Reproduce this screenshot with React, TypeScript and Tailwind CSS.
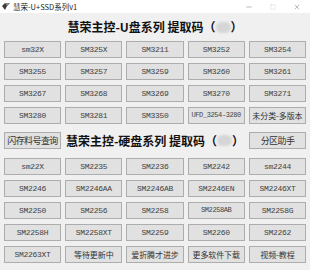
import { Minus, Square, X } from 'lucide-react'

const U_DISK = [
  'sm32X', 'SM325X', 'SM3211', 'SM3252', 'SM3254',
  'SM3255', 'SM3257', 'SM3259', 'SM3260', 'SM3261',
  'SM3267', 'SM3268', 'SM3269', 'SM3270', 'SM3271',
  'SM3280', 'SM3281', 'SM3350', 'UFD_3254-3280', '未分类-多版本',
]

const SSD = [
  'sm22X', 'SM2235', 'SM2236', 'SM2242', 'sm2244',
  'SM2246', 'SM2246AA', 'SM2246AB', 'SM2246EN', 'SM2246XT',
  'SM2250', 'SM2256', 'SM2258', 'SM2258AB', 'SM2258G',
  'SM2258H', 'SM2258XT', 'SM2259', 'SM2260', 'SM2262',
  'SM2263XT', '等待更新中', '爱折腾才进步', '更多软件下载', '视频-教程',
]

const CJK = '"Noto Sans CJK SC", sans-serif'
const MONO = '"Liberation Mono", monospace'

const isCjk = (s: string) => /[\u4e00-\u9fff]/.test(s)

function Btn({ label, wide }: { label: string; wide?: boolean }) {
  const cjk = isCjk(label)
  const small = label.startsWith('UFD') || label === 'SM2258AB'
  let size = 'text-[8px] tracking-[-0.3px] text-[#444]'
  if (wide) size = 'text-[9px] tracking-[-0.6px] text-[#333]'
  else if (cjk) size = 'text-[8px] tracking-[-0.1px] text-[#333]'
  else if (small) size = 'text-[7px] tracking-[-0.4px] text-[#444]'
  return (
    <button
      className={`h-[17px] ${wide ? 'w-[57px]' : 'w-full'} bg-[#e1e1e1] border border-[#adadad] flex items-center justify-center leading-none whitespace-nowrap overflow-hidden ${size}`}
      style={{ fontFamily: cjk ? CJK : MONO }}
    >
      {label}
    </button>
  )
}

function Heading({ kind }: { kind: string }) {
  return (
    <span
      className="text-[12px] font-bold text-[#111] leading-none whitespace-nowrap flex items-center"
      style={{ fontFamily: CJK }}
    >
      慧荣主控-{kind}系列 提取码（
      <span className="inline-block w-[15px] h-[11px] rounded-full bg-[#d6d6d6] blur-[1px]" />
      ）
    </span>
  )
}

export default function App() {
  return (
    <div className="w-[310px] h-[270px] bg-[#f0f0f0] flex flex-col overflow-hidden">

      {/* title bar */}
      <div className="h-[13px] bg-white flex items-center pl-[2px] pr-[9px]">
        <svg width="8" height="7" viewBox="0 0 8 7" className="mr-[3px]">
          <path d="M0 3 L3 0 L8 0 L5 3 L3 7 Z" fill="#3b3b3b" />
          <path d="M3 0 L5 3 L8 0 Z" fill="#8a8a8a" />
        </svg>
        <span className="text-[7.5px] text-[#222] leading-none" style={{ fontFamily: CJK }}>
          慧荣-U+SSD系列v1
        </span>
        <div className="ml-auto flex items-center gap-[17px] text-[#555]">
          <Minus size={8} strokeWidth={1.2} />
          <Square size={6} strokeWidth={1} className="text-[#aaa]" />
          <X size={8} strokeWidth={1.2} />
        </div>
      </div>

      {/* U盘 */}
      <div className="h-[28px] flex items-center justify-center">
        <Heading kind="U盘" />
      </div>
      <div className="px-[4px] grid grid-cols-5 gap-x-[4px] gap-y-[5px]">
        {U_DISK.map(l => <Btn key={l} label={l} />)}
      </div>

      {/* 硬盘 header */}
      <div className="mt-[8px] px-[4px] flex items-center justify-between">
        <Btn label="闪存料号查询" wide />
        <Heading kind="硬盘" />
        <Btn label="分区助手" wide />
      </div>

      <div className="mt-[9px] px-[4px] grid grid-cols-5 gap-x-[4px] gap-y-[5px]">
        {SSD.map(l => <Btn key={l} label={l} />)}
      </div>
    </div>
  )
}
